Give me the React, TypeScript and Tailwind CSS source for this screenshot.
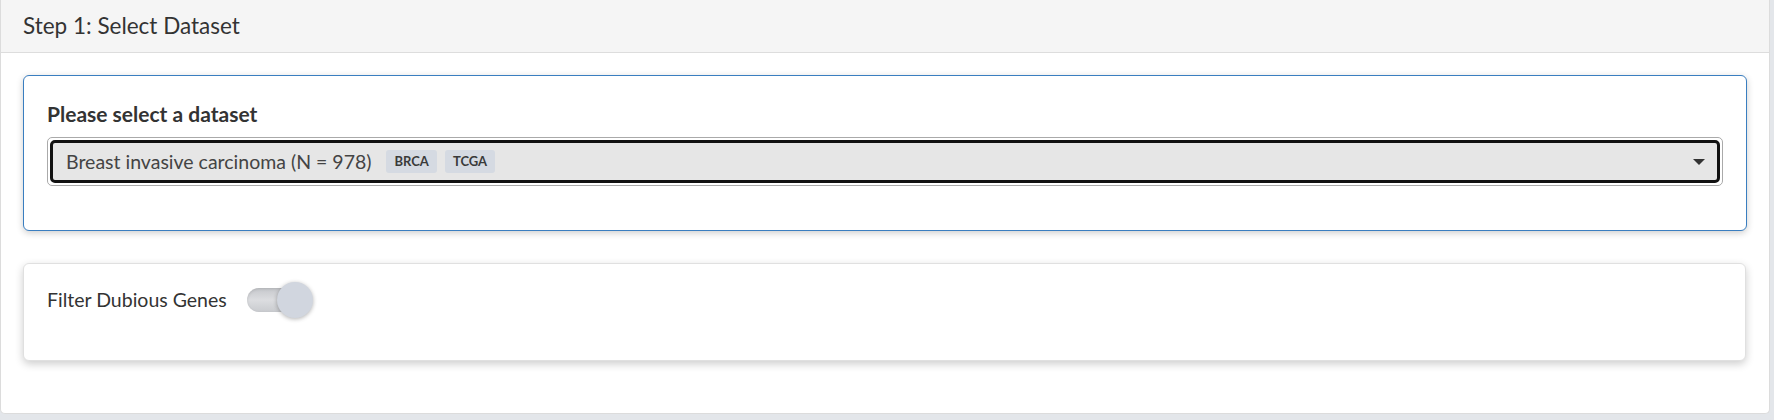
export default function App() {
  return (
    <div className="h-[420px] w-full bg-[#e3e6ea] font-['Lato','Noto_Sans',sans-serif] text-[#333]">
      <div className="h-[414px] w-[1770px] bg-white border border-t-0 border-[#dcdcdc] rounded-b-[5px] overflow-hidden">
        <div className="h-[53px] bg-[#f5f5f5] border-b border-[#dddddd] pl-[22px] flex items-center text-[22.5px] text-[#333]">
          Step 1: Select Dataset
        </div>
        <div className="pt-[22px] pl-[22px] pr-[22px] flex flex-col gap-[32px]">
          <div className="h-[156px] border border-[#3a7ec0] rounded-[6px] bg-white shadow-[0_2px_7px_rgba(0,0,0,0.2)] pl-[23px] pr-[23px] pt-[25px]">
            <div className="text-[21px] font-bold text-[#333] leading-[25px]">Please select a dataset</div>
            <div className="mt-[11px] h-[49px] border border-[#aaaaaa] rounded-[5px] p-[2px] bg-white">
              <div className="h-full border-[3px] border-[#111] rounded-[5px] bg-[#e6e6e6] flex items-center pl-[13px] pr-[12px]">
                <span className="text-[19.5px] text-[#444]">Breast invasive carcinoma (N = 978)</span>
                <span className="ml-[15px] h-[23px] px-[8px] flex items-center rounded-[3px] bg-[#d5dae2] text-[13px] font-bold text-[#3a3a3a]">BRCA</span>
                <span className="ml-[8px] h-[23px] px-[8px] flex items-center rounded-[3px] bg-[#d5dae2] text-[13px] font-bold text-[#3a3a3a]">TCGA</span>
                <span className="ml-auto flex">
                  <svg width="12" height="6" viewBox="0 0 12 6">
                    <path d="M0 0 L12 0 L6 6 Z" fill="#333" />
                  </svg>
                </span>
              </div>
            </div>
          </div>
          <div className="h-[98px] mr-[1px] border border-[#e0e0e0] rounded-[6px] bg-white shadow-[0_3px_9px_rgba(0,0,0,0.2)] pl-[23px] pt-[18px]">
            <div className="flex items-center h-[36px]">
              <span className="text-[19.5px] leading-[24px] text-[#333]">Filter Dubious Genes</span>
              <div className="ml-[20px] relative w-[66px] h-[36px] flex items-center">
                <div className="w-[53px] h-[24px] rounded-full bg-gradient-to-b from-[#c6c8cc] via-[#dcdde0] to-[#c9cbcf] shadow-[inset_0_1px_3px_rgba(0,0,0,0.12)]" />
                <div className="absolute left-[30px] top-0 w-[36px] h-[36px] rounded-full bg-[#d1d6df] shadow-[0_1px_4px_rgba(0,0,0,0.3)]" />
              </div>
            </div>
          </div>
        </div>
      </div>
    </div>
  );
}
